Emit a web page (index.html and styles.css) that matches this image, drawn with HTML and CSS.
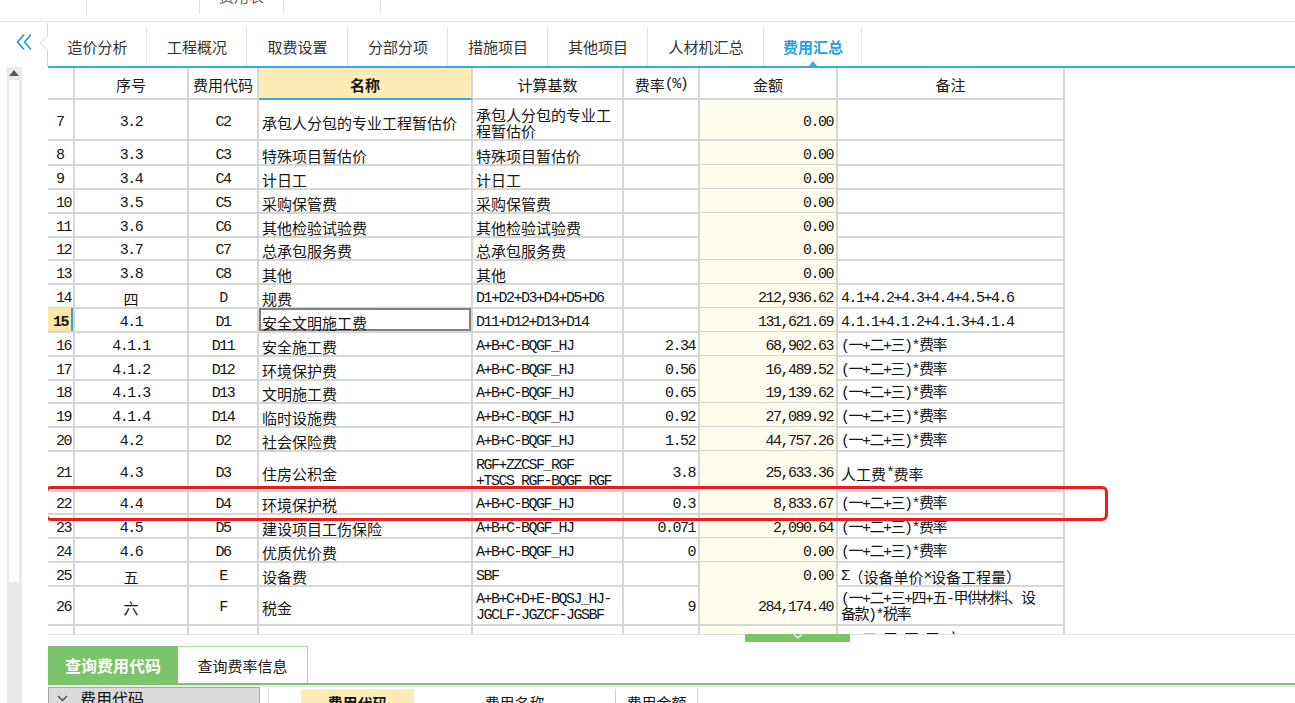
FILE: index.html
```html
<!DOCTYPE html>
<html lang="zh-CN">
<head>
<meta charset="utf-8">
<title>费用汇总</title>
<link rel="stylesheet" href="styles.css">
</head>
<body>
<div class="top">
  <div class="top-cell w86"></div>
  <div class="top-cell w113"></div>
  <div class="top-cell w84"><span class="top-text">费用表</span></div>
  <div class="top-cell w97"></div>
</div>
<div class="work">
  <div class="side">
    <div class="side-top">
      <svg class="collapse" width="18" height="18" viewBox="0 0 18 18"><polyline points="8,1.5 1.5,9 8,16.5" fill="none" stroke="#1c9ae2" stroke-width="1.6"/><polyline points="15,1.5 8.5,9 15,16.5" fill="none" stroke="#1c9ae2" stroke-width="1.6"/></svg>
      <svg class="notch" width="12" height="45" viewBox="0 0 12 45"><polyline points="11.5,1 11.5,14 4,21 11.5,28 11.5,45" fill="none" stroke="#d6d6d6" stroke-width="1"/></svg>
    </div>
    <div class="scroll">
      <svg class="up" width="10" height="6" viewBox="0 0 10 6"><polygon points="5,0 10,6 0,6" fill="#5a5a5a"/></svg>
      <div class="thumb"></div>
    </div>
  </div>
  <div class="content">
    <div class="tabs">
      <div class="tab t99">造价分析</div>
      <div class="tab t100">工程概况</div>
      <div class="tab t101">取费设置</div>
      <div class="tab t100">分部分项</div>
      <div class="tab t100">措施项目</div>
      <div class="tab t100">其他项目</div>
      <div class="tab t116">人材机汇总</div>
      <div class="tab t98 active">费用汇总</div>
    </div>
    <div class="grid">
      <div class="row hdr">
        <div class="c"></div>
        <div class="c ctr">序号</div>
        <div class="c ctr">费用代码</div>
        <div class="c ctr name-h">名称</div>
        <div class="c ctr">计算基数</div>
        <div class="c ctr">费率<span class="m">(%)</span></div>
        <div class="c ctr">金额</div>
        <div class="c ctr">备注</div>
      </div>
      <div class="body">
        <div class="row dbl"><div class="c rn m">7</div><div class="c ctr m">3.2</div><div class="c ctr m">C2</div><div class="c l">承包人分包的专业工程暂估价</div><div class="c l wrap">承包人分包的专业工程暂估价</div><div class="c r"></div><div class="c r amt m">0.00</div><div class="c l"></div></div>
        <div class="row"><div class="c rn m">8</div><div class="c ctr m">3.3</div><div class="c ctr m">C3</div><div class="c l">特殊项目暂估价</div><div class="c l">特殊项目暂估价</div><div class="c r"></div><div class="c r amt m">0.00</div><div class="c l"></div></div>
        <div class="row"><div class="c rn m">9</div><div class="c ctr m">3.4</div><div class="c ctr m">C4</div><div class="c l">计日工</div><div class="c l">计日工</div><div class="c r"></div><div class="c r amt m">0.00</div><div class="c l"></div></div>
        <div class="row"><div class="c rn m">10</div><div class="c ctr m">3.5</div><div class="c ctr m">C5</div><div class="c l">采购保管费</div><div class="c l">采购保管费</div><div class="c r"></div><div class="c r amt m">0.00</div><div class="c l"></div></div>
        <div class="row"><div class="c rn m">11</div><div class="c ctr m">3.6</div><div class="c ctr m">C6</div><div class="c l">其他检验试验费</div><div class="c l">其他检验试验费</div><div class="c r"></div><div class="c r amt m">0.00</div><div class="c l"></div></div>
        <div class="row"><div class="c rn m">12</div><div class="c ctr m">3.7</div><div class="c ctr m">C7</div><div class="c l">总承包服务费</div><div class="c l">总承包服务费</div><div class="c r"></div><div class="c r amt m">0.00</div><div class="c l"></div></div>
        <div class="row"><div class="c rn m">13</div><div class="c ctr m">3.8</div><div class="c ctr m">C8</div><div class="c l">其他</div><div class="c l">其他</div><div class="c r"></div><div class="c r amt m">0.00</div><div class="c l"></div></div>
        <div class="row"><div class="c rn m">14</div><div class="c ctr">四</div><div class="c ctr m">D</div><div class="c l">规费</div><div class="c l m">D1+D2+D3+D4+D5+D6</div><div class="c r"></div><div class="c r amt m">212,936.62</div><div class="c l m">4.1+4.2+4.3+4.4+4.5+4.6</div></div>
        <div class="row"><div class="c rn m cur">15</div><div class="c ctr m">4.1</div><div class="c ctr m">D1</div><div class="c l sel">安全文明施工费</div><div class="c l m">D11+D12+D13+D14</div><div class="c r"></div><div class="c r amt m">131,621.69</div><div class="c l m">4.1.1+4.1.2+4.1.3+4.1.4</div></div>
        <div class="row"><div class="c rn m">16</div><div class="c ctr m">4.1.1</div><div class="c ctr m">D11</div><div class="c l">安全施工费</div><div class="c l m">A+B+C-BQGF_HJ</div><div class="c r m">2.34</div><div class="c r amt m">68,902.63</div><div class="c l m">(一+二+三)*费率</div></div>
        <div class="row"><div class="c rn m">17</div><div class="c ctr m">4.1.2</div><div class="c ctr m">D12</div><div class="c l">环境保护费</div><div class="c l m">A+B+C-BQGF_HJ</div><div class="c r m">0.56</div><div class="c r amt m">16,489.52</div><div class="c l m">(一+二+三)*费率</div></div>
        <div class="row"><div class="c rn m">18</div><div class="c ctr m">4.1.3</div><div class="c ctr m">D13</div><div class="c l">文明施工费</div><div class="c l m">A+B+C-BQGF_HJ</div><div class="c r m">0.65</div><div class="c r amt m">19,139.62</div><div class="c l m">(一+二+三)*费率</div></div>
        <div class="row"><div class="c rn m">19</div><div class="c ctr m">4.1.4</div><div class="c ctr m">D14</div><div class="c l">临时设施费</div><div class="c l m">A+B+C-BQGF_HJ</div><div class="c r m">0.92</div><div class="c r amt m">27,089.92</div><div class="c l m">(一+二+三)*费率</div></div>
        <div class="row"><div class="c rn m">20</div><div class="c ctr m">4.2</div><div class="c ctr m">D2</div><div class="c l">社会保险费</div><div class="c l m">A+B+C-BQGF_HJ</div><div class="c r m">1.52</div><div class="c r amt m">44,757.26</div><div class="c l m">(一+二+三)*费率</div></div>
        <div class="row dbl2"><div class="c rn m">21</div><div class="c ctr m">4.3</div><div class="c ctr m">D3</div><div class="c l">住房公积金</div><div class="c l m tight">RGF+ZZCSF_RGF<br>+TSCS_RGF-BQGF_RGF</div><div class="c r m">3.8</div><div class="c r amt m">25,633.36</div><div class="c l">人工费<span class="m">*</span>费率</div></div>
        <div class="row mark"><div class="c rn m">22</div><div class="c ctr m">4.4</div><div class="c ctr m">D4</div><div class="c l">环境保护税</div><div class="c l m">A+B+C-BQGF_HJ</div><div class="c r m">0.3</div><div class="c r amt m">8,833.67</div><div class="c l m">(一+二+三)*费率</div><div class="redbox"></div></div>
        <div class="row"><div class="c rn m">23</div><div class="c ctr m">4.5</div><div class="c ctr m">D5</div><div class="c l">建设项目工伤保险</div><div class="c l m">A+B+C-BQGF_HJ</div><div class="c r m">0.071</div><div class="c r amt m">2,090.64</div><div class="c l m">(一+二+三)*费率</div></div>
        <div class="row"><div class="c rn m">24</div><div class="c ctr m">4.6</div><div class="c ctr m">D6</div><div class="c l">优质优价费</div><div class="c l m">A+B+C-BQGF_HJ</div><div class="c r m">0</div><div class="c r amt m">0.00</div><div class="c l m">(一+二+三)*费率</div></div>
        <div class="row"><div class="c rn m">25</div><div class="c ctr">五</div><div class="c ctr m">E</div><div class="c l">设备费</div><div class="c l m">SBF</div><div class="c r"></div><div class="c r amt m">0.00</div><div class="c l"><span class="m">Σ</span>（设备单价<span class="m">×</span>设备工程量）</div></div>
        <div class="row dbl"><div class="c rn m">26</div><div class="c ctr">六</div><div class="c ctr m">F</div><div class="c l">税金</div><div class="c l m tight">A+B+C+D+E-BQSJ_HJ-<br>JGCLF-JGZCF-JGSBF</div><div class="c r m">9</div><div class="c r amt m">284,174.40</div><div class="c l m tight">(一+二+三+四+五-甲供材料、设<br>备款)*税率</div></div>
        <div class="row"><div class="c rn m">27</div><div class="c ctr">七</div><div class="c ctr m">G</div><div class="c l">工程造价</div><div class="c l m">A+B+C+D+E+F</div><div class="c r"></div><div class="c r amt m">3,541,021.37</div><div class="c l m">一+二+三+四+五+六</div></div>
      </div>
    </div>
    <div class="bottom">
      <div class="handle"><svg width="10" height="5" viewBox="0 0 10 5"><polyline points="1,0.5 5,4 9,0.5" fill="none" stroke="#ffffff" stroke-width="1.2"/></svg></div>
      <div class="btabs">
        <div class="btab on">查询费用代码</div>
        <div class="btab">查询费率信息</div>
      </div>
      <div class="bpanel">
        <div class="tree">
          <svg class="tchev" width="11" height="7" viewBox="0 0 11 7"><polyline points="1,1 5.5,5.5 10,1" fill="none" stroke="#444" stroke-width="1.4"/></svg>
          <span>费用代码</span>
        </div>
        <div class="btable">
          <div class="bc w32"></div>
          <div class="bc w113 yel">费用代码</div>
          <div class="bc w202">费用名称</div>
          <div class="bc w82">费用金额</div>
        </div>
      </div>
    </div>
  </div>
</div>
</body>
</html>
```
FILE: styles.css
```css
* { box-sizing: border-box; }

body {
  margin: 0;
  width: 1295px;
  height: 703px;
  overflow: hidden;
  background: #ffffff;
  font-family: "Noto Sans CJK SC", "Liberation Sans", sans-serif;
  font-size: 15px;
  color: #151515;
}

/* top strip */
.top {
  height: 22px;
  border-bottom: 1px solid #e3e3e3;
  display: flex;
  overflow: hidden;
}
.top-cell {
  height: 14px;
  border-right: 1px solid #e0e0e0;
  overflow: hidden;
  text-align: center;
}
.w86 { width: 87px; }
.w113 { width: 113px; }
.w84 { width: 84px; }
.w97 { width: 97px; }
.top-text {
  display: block;
  margin-top: -14px;
  line-height: 20px;
  color: #606060;
}

.work {
  display: flex;
  height: 681px;
}

/* left side */
.side {
  width: 48px;
  display: flex;
  flex-direction: column;
}
.side-top {
  height: 45px;
  display: flex;
  justify-content: flex-end;
  align-items: flex-start;
}
.collapse { margin-top: 11px; margin-right: 2px; }
.notch { display: block; }
.scroll {
  margin-left: 7px;
  width: 15px;
  flex: 1;
  background: #e9e9e9;
  padding: 3px 3px 0 2px;
  display: flex;
  flex-direction: column;
  align-items: center;
}
.up { display: block; margin-bottom: 4px; }
.thumb {
  width: 10px;
  height: 502px;
  background: #ffffff;
  align-self: flex-start;
}

/* main content */
.content {
  flex: 1;
  display: flex;
  flex-direction: column;
}
.tabs {
  height: 46px;
  border-bottom: 2px solid #3aa9e0;
  display: flex;
}
.tab {
  height: 44px;
  padding-top: 5px;
  display: flex;
  align-items: center;
  justify-content: center;
  color: #333;
  position: relative;
}
.tab::before {
  content: "";
  position: absolute;
  right: 0;
  top: 5px;
  bottom: 0;
  border-right: 1px solid #e2e2e2;
}
.t99 { width: 99px; }
.t100 { width: 100px; }
.t101 { width: 101px; }
.t116 { width: 116px; }
.t98 { width: 98px; }
.tab.active {
  color: #1fa2e6;
  font-weight: bold;
}
.tab.active::after {
  content: "";
  position: absolute;
  left: 50%;
  bottom: 0;
  margin-left: -4px;
  border-left: 4px solid transparent;
  border-right: 4px solid transparent;
  border-bottom: 5px solid #3aa9e0;
}

/* grid */
.grid {
  height: 566px;
  overflow: hidden;
}
.row {
  display: grid;
  grid-template-columns: 27px 114px 70px 214px 151px 76px 138px 227px;
  height: 23.85px;
  width: 1017px;
}
.row.hdr { height: 32px; }
.row.dbl { height: 41px; }
.row.dbl2 { height: 39px; }
.body {
  height: 534px;
  overflow: hidden;
}
.c {
  border-right: 2px solid #d6d6d6;
  border-bottom: 2px solid #d6d6d6;
  display: flex;
  align-items: center;
  overflow: visible;
  white-space: nowrap;
  line-height: 16px;
  padding: 7px 3px 0;
}
.hdr .c { justify-content: center; color: #1a1a1a; padding-top: 3px; }
.name-h {
  background: #fdecb6;
  font-weight: bold;
  border-bottom-color: #3ea6dc !important;
}
.ctr { justify-content: center; }
.l { justify-content: flex-start; }
.r { justify-content: flex-end; }
.rn { padding-left: 8px; }
.wrap { white-space: normal; }
.tight { white-space: nowrap; line-height: 16px; }
.amt { background: #fffdee; }
.m {
  font-family: "Liberation Mono", "Noto Sans CJK SC", monospace;
  font-size: 15px;
  letter-spacing: -1.5px;
}
.cur {
  background: #fde7a8;
  font-weight: bold;
  box-shadow: inset -2px 0 0 #3a9fe0;
  padding-left: 5px;
}
.sel {
  box-shadow: inset 0 0 0 2px #808080;
}
.mark { position: relative; }
.redbox {
  position: absolute;
  left: -3px;
  top: -4px;
  width: 1063px;
  height: 35px;
  border: 3px solid #f01c1c;
  border-radius: 6px;
}

/* bottom */
.bottom {
  flex: 1;
  border-top: 1px solid #e0e0e0;
  position: relative;
}
.handle {
  position: absolute;
  left: 697px;
  top: -1px;
  width: 105px;
  height: 8px;
  background: #7cc46c;
  display: flex;
  justify-content: center;
  align-items: flex-start;
}
.handle svg { display: block; }
.btabs {
  margin-top: 11px;
  height: 39px;
  border-bottom: 2px solid #7cc46c;
  display: flex;
}
.btab {
  width: 130px;
  height: 37px;
  display: flex;
  align-items: center;
  justify-content: center;
  border: 1px solid #a8dca0;
  border-left: none;
  border-bottom: none;
  color: #1a1a1a;
}
.btab.on {
  background: #7cc46c;
  color: #ffffff;
  font-weight: bold;
  font-size: 16px;
  border: none;
}
.bpanel {
  display: flex;
  border-top: 2px solid #ececec;
  height: 18px;
}
.tree {
  width: 212px;
  height: 22px;
  background: #dadada;
  border: 1px solid #a8a8a8;
  display: flex;
  align-items: center;
  font-size: 16px;
  color: #111;
}
.tchev { margin: 0 12px 0 8px; }
.btable {
  margin-left: 8px;
  border-left: 1px solid #dce6ee;
  display: flex;
  padding-top: 2px;
}
.bc {
  height: 22px;
  border-right: 1px solid #cfcfcf;
  display: flex;
  align-items: center;
  justify-content: center;
  padding-top: 4px;
}
.w32 { width: 32px; border-right: none; }
.w202 { width: 202px; }
.w82 { width: 82px; }
.yel { background: #fdecb6; font-weight: bold; border-right: none; }
.bc.w113 { width: 113px; }
```
